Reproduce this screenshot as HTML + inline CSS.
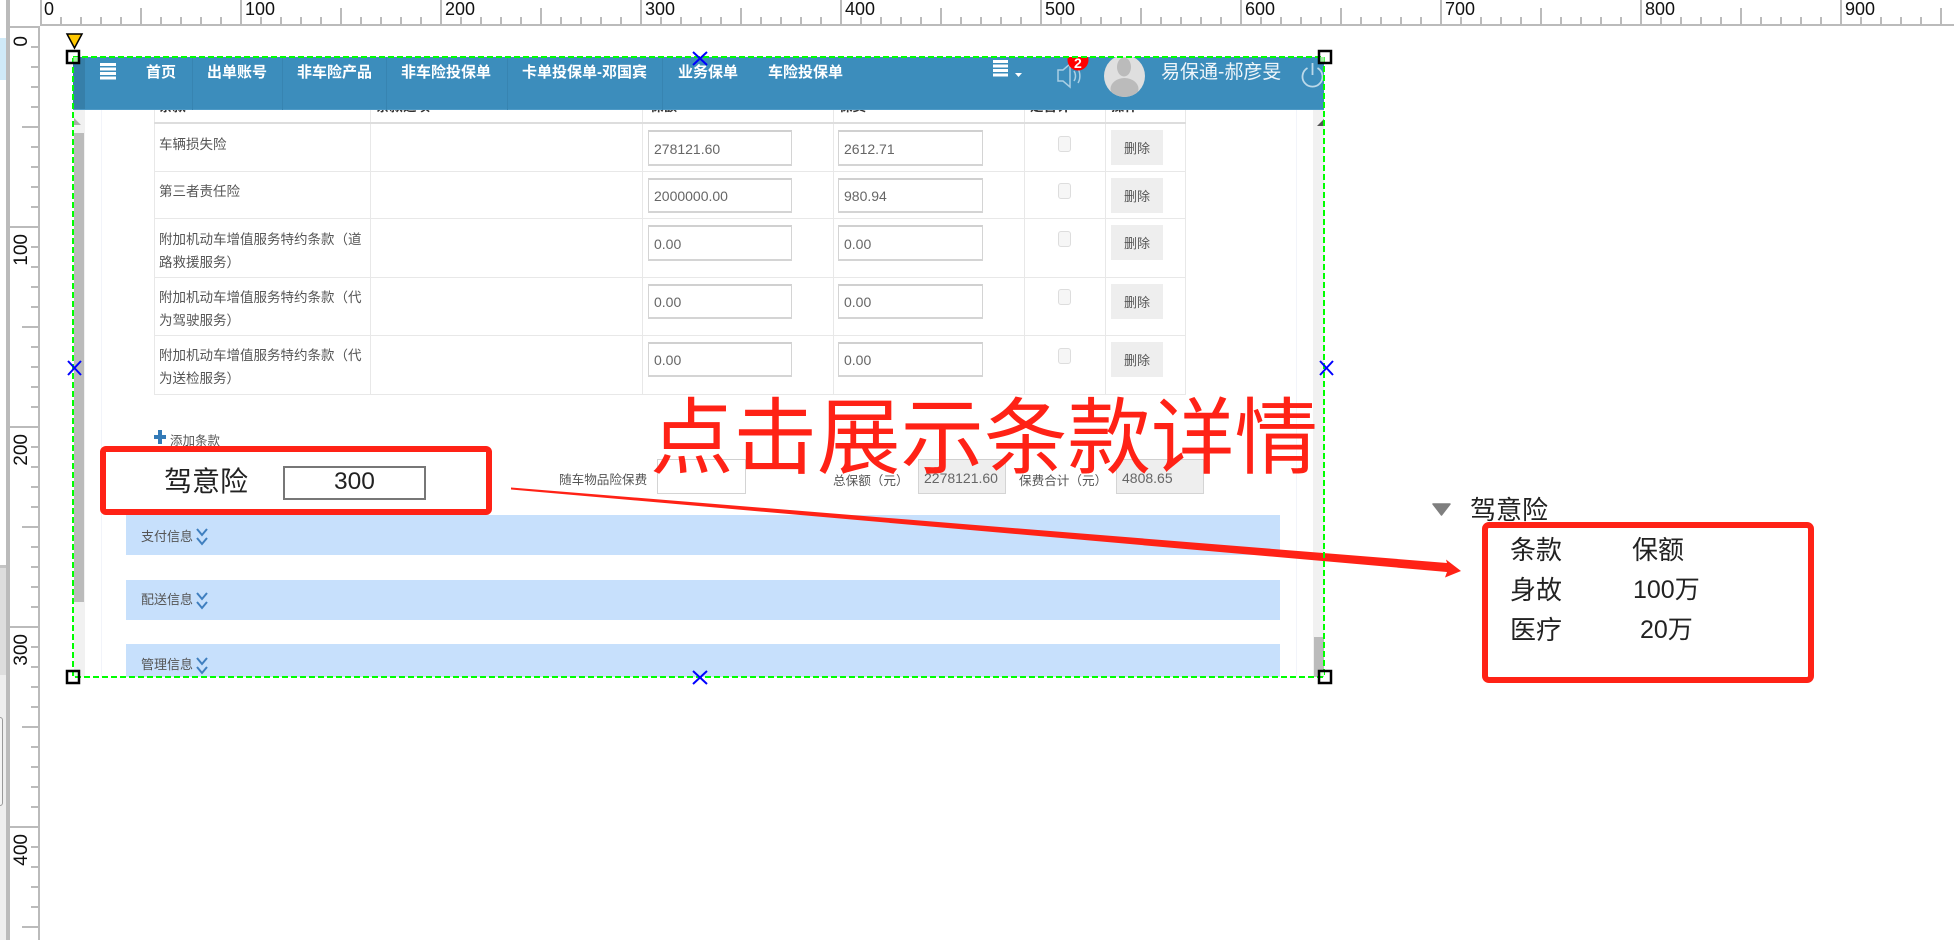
<!DOCTYPE html>
<html lang="zh-CN"><head><meta charset="utf-8"><title>驾意险</title>
<style>
html,body{margin:0;padding:0;background:#fff}
#p{position:relative;width:1954px;height:940px;overflow:hidden;background:#fff;font-family:"Liberation Sans","Noto Sans CJK SC",sans-serif;color:#555}
#p div,#p span,#p svg{position:absolute;display:block}
.t{white-space:nowrap}
.h{left:0;font-size:18px;line-height:18px;color:#111;top:0}
.v{left:15px;font-size:19px;line-height:14px;width:14px;color:#111;writing-mode:vertical-rl;transform:rotate(180deg);white-space:nowrap}
.n{top:63px;height:20px;line-height:20px;font-size:15px;font-weight:700;color:#fff;white-space:nowrap}
.d{top:57px;height:53px;width:1px;background:#3784b1}
.r{font-size:13.5px;line-height:23px;color:#555;left:159px;white-space:nowrap}
.th{top:100px;font-size:13.5px;line-height:14px;font-weight:700;color:#333;white-space:nowrap}
.i{box-sizing:border-box;border:1px solid #d4d4d4;border-top:2px solid #d0d0d0;border-bottom:2px solid #d4d4d4;background:#fff;font-size:14px;color:#666;padding-left:5px;white-space:nowrap}
.a{left:648px;width:144px}
.b{left:838px;width:145px}
.c{left:1058px;width:13px;height:16px;box-sizing:border-box;border:1px solid #ddd;border-radius:3px;background:#f6f6f6}
.x{left:1111px;width:52px;background:#eee;font-size:13px;color:#555;text-align:center}
.l{background:#e8e8e8}
.band{left:126px;width:1154px;background:#c7e0fc}
.bt{left:141px;font-size:13px;line-height:18px;color:#555;white-space:nowrap}
.big{font-family:"Liberation Sans","Noto Sans CJK SC",sans-serif;color:#222;white-space:nowrap}
</style></head><body><div id="p">

<!-- left window strip -->
<div style="left:0;top:38px;width:6px;height:42px;background:#cfe9f7"></div>
<div style="left:0;top:565px;width:6px;height:110px;background:#ddd"></div>
<div style="left:0;top:565px;width:6px;height:3px;background:#c4c4c4"></div>
<div style="left:0;top:675px;width:6px;height:265px;background:#eee"></div>
<div style="left:-3px;top:717px;width:6px;height:89px;box-sizing:border-box;border:1px solid #999;border-radius:3px;background:#f4f4f4"></div>
<div style="left:6px;top:0;width:4px;height:940px;background:#bbb"></div>

<!-- rulers -->
<div style="left:40px;top:24px;width:1914px;height:2px;background:#bbb"></div>
<div style="left:40px;top:0;width:2px;height:26px;background:#bbb"></div>
<div style="left:10px;top:26px;width:30px;height:2px;background:#bbb"></div>
<div style="left:38px;top:26px;width:2px;height:914px;background:#bbb"></div>
<div style="left:40px;top:17px;width:1914px;height:7px;background:repeating-linear-gradient(to right,#bbb 0,#bbb 2px,transparent 2px,transparent 20px)"></div>
<div style="left:140px;top:8px;width:1814px;height:16px;background:repeating-linear-gradient(to right,#bbb 0,#bbb 2px,transparent 2px,transparent 200px)"></div>
<div style="left:240px;top:0;width:1714px;height:24px;background:repeating-linear-gradient(to right,#bbb 0,#bbb 2px,transparent 2px,transparent 200px)"></div>
<div style="left:31px;top:46px;width:7px;height:894px;background:repeating-linear-gradient(to bottom,#bbb 0,#bbb 2px,transparent 2px,transparent 20px)"></div>
<div style="left:22px;top:126px;width:16px;height:814px;background:repeating-linear-gradient(to bottom,#bbb 0,#bbb 2px,transparent 2px,transparent 200px)"></div>
<div style="left:10px;top:226px;width:28px;height:714px;background:repeating-linear-gradient(to bottom,#bbb 0,#bbb 2px,transparent 2px,transparent 200px)"></div>

<div class="h" style="left:44px">0</div><div class="h" style="left:245px">100</div><div class="h" style="left:445px">200</div><div class="h" style="left:645px">300</div><div class="h" style="left:845px">400</div><div class="h" style="left:1045px">500</div><div class="h" style="left:1245px">600</div><div class="h" style="left:1445px">700</div><div class="h" style="left:1645px">800</div><div class="h" style="left:1845px">900</div>
<div class="v" style="top:36px">0</div><div class="v" style="top:234px">100</div><div class="v" style="top:434px">200</div><div class="v" style="top:634px">300</div><div class="v" style="top:834px">400</div>

<!-- page inner decoration -->
<div style="left:101px;top:109px;width:1px;height:568px;background:#f2f4fa"></div>
<div style="left:1296px;top:109px;width:1px;height:568px;background:#f2f4fa"></div>
<div style="left:74px;top:109px;width:11px;height:568px;background:#f1f1f1"></div>
<div style="left:74px;top:133px;width:10px;height:469px;background:#bbb"></div>
<svg style="left:74px;top:116px" width="8" height="10"><polygon points="0,9 0,2 7,9" fill="#aaa"/></svg>
<div style="left:1313px;top:109px;width:11px;height:568px;background:#f1f1f1"></div>
<div style="left:1314px;top:637px;width:10px;height:40px;background:#bbb"></div>
<svg style="left:1317px;top:119px" width="8" height="8"><polygon points="0,7 7,0 7,7" fill="#555"/></svg>

<!-- table -->
<div class="l" style="left:154px;top:109px;width:1px;height:285px"></div>
<div class="l" style="left:370px;top:109px;width:1px;height:285px"></div>
<div class="l" style="left:642px;top:109px;width:1px;height:285px"></div>
<div class="l" style="left:833px;top:109px;width:1px;height:285px"></div>
<div class="l" style="left:1024px;top:109px;width:1px;height:285px"></div>
<div class="l" style="left:1105px;top:109px;width:1px;height:285px"></div>
<div class="l" style="left:1185px;top:109px;width:1px;height:285px"></div>
<div style="left:154px;top:122px;width:1032px;height:2px;background:#ddd"></div>
<div class="l" style="left:154px;top:171px;width:1032px;height:1px"></div>
<div class="l" style="left:154px;top:218px;width:1032px;height:1px"></div>
<div class="l" style="left:154px;top:277px;width:1032px;height:1px"></div>
<div class="l" style="left:154px;top:335px;width:1032px;height:1px"></div>
<div class="l" style="left:154px;top:394px;width:1032px;height:1px"></div>

<div class="th" style="left:159px">条款</div><div class="th" style="left:376px">条款选项</div><div class="th" style="left:650px">保额</div><div class="th" style="left:839px">保费</div><div class="th" style="left:1030px">是否计</div><div class="th" style="left:1111px">操作</div>

<div class="r" style="top:133px">车辆损失险</div>
<div class="r" style="top:180px">第三者责任险</div>
<div class="r" style="top:228px;width:210px;white-space:normal">附加机动车增值服务特约条款（道路救援服务）</div>
<div class="r" style="top:286px;width:210px;white-space:normal">附加机动车增值服务特约条款（代为驾驶服务）</div>
<div class="r" style="top:344px;width:210px;white-space:normal">附加机动车增值服务特约条款（代为送检服务）</div>

<div class="i a" style="top:130px;height:36px;line-height:34px">278121.60</div>
<div class="i b" style="top:130px;height:36px;line-height:34px">2612.71</div>
<div class="i a" style="top:178px;height:35px;line-height:33px">2000000.00</div>
<div class="i b" style="top:178px;height:35px;line-height:33px">980.94</div>
<div class="i a" style="top:225px;height:36px;line-height:34px">0.00</div>
<div class="i b" style="top:225px;height:36px;line-height:34px">0.00</div>
<div class="i a" style="top:284px;height:35px;line-height:33px">0.00</div>
<div class="i b" style="top:284px;height:35px;line-height:33px">0.00</div>
<div class="i a" style="top:342px;height:35px;line-height:33px">0.00</div>
<div class="i b" style="top:342px;height:35px;line-height:33px">0.00</div>

<div class="c" style="top:136px"></div><div class="c" style="top:183px"></div><div class="c" style="top:231px"></div><div class="c" style="top:289px"></div><div class="c" style="top:348px"></div>

<div class="x" style="top:130px;height:35px;line-height:37px">删除</div>
<div class="x" style="top:178px;height:35px;line-height:37px">删除</div>
<div class="x" style="top:225px;height:35px;line-height:37px">删除</div>
<div class="x" style="top:284px;height:35px;line-height:37px">删除</div>
<div class="x" style="top:342px;height:35px;line-height:37px">删除</div>

<!-- add clause -->
<svg style="left:154px;top:430px" width="12" height="14"><path d="M4 0h4v5h4v4H8v5H4V9H0V5h4z" fill="#337ab7"/></svg>
<div class="t" style="left:170px;top:432px;font-size:12.5px;line-height:18px;color:#555">添加条款</div>

<!-- summary row -->
<div class="t" style="left:559px;top:471px;font-size:12.6px;line-height:18px;color:#555">随车物品险保费</div>
<div class="i" style="left:657px;top:459px;width:89px;height:35px;border-width:1px"></div>
<div class="t" style="left:833px;top:472px;font-size:12.6px;line-height:18px;color:#555">总保额（元）</div>
<div class="i" style="left:918px;top:459px;width:88px;height:35px;border-width:1px;background:#eee;line-height:37px;font-size:14px">2278121.60</div>
<div class="t" style="left:1019px;top:472px;font-size:12.6px;line-height:18px;color:#555">保费合计（元）</div>
<div class="i" style="left:1116px;top:459px;width:88px;height:35px;border-width:1px;background:#eee;line-height:37px;font-size:14px">4808.65</div>

<!-- bands -->
<div class="band" style="top:515px;height:40px"></div>
<div class="band" style="top:580px;height:40px"></div>
<div class="band" style="top:644px;height:33px"></div>
<div class="bt" style="top:528px">支付信息</div>
<div class="bt" style="top:591px">配送信息</div>
<div class="bt" style="top:656px">管理信息</div>
<svg style="left:196px;top:528px" width="12" height="18"><path d="M1 1l5 6 5-6M1 10l5 6 5-6" fill="none" stroke="#3f7fbf" stroke-width="2"/></svg>
<svg style="left:196px;top:592px" width="12" height="18"><path d="M1 1l5 6 5-6M1 10l5 6 5-6" fill="none" stroke="#3f7fbf" stroke-width="2"/></svg>
<svg style="left:196px;top:657px" width="12" height="18"><path d="M1 1l5 6 5-6M1 10l5 6 5-6" fill="none" stroke="#3f7fbf" stroke-width="2"/></svg>

<!-- header -->
<div style="left:73px;top:57px;width:1251px;height:53px;background:#3c8dbc;overflow:hidden"></div>
<div style="left:73px;top:57px;width:12px;height:53px;background:#367fa9"></div>
<div style="left:73px;top:109px;width:1251px;height:1px;background:#4f9ac6"></div>
<div class="d" style="left:192px"></div><div class="d" style="left:282px"></div><div class="d" style="left:386px"></div><div class="d" style="left:507px"></div><div class="d" style="left:662px"></div>
<svg style="left:100px;top:63px" width="17" height="17"><path d="M0 0h16v3H0zM0 4.500h16v3H0zM0 9h16v3H0zM0 13.500h16v3H0z" fill="#fff"/></svg>
<div class="n" style="left:146px">首页</div>
<div class="n" style="left:207px">出单账号</div>
<div class="n" style="left:297px">非车险产品</div>
<div class="n" style="left:401px">非车险投保单</div>
<div class="n" style="left:522px">卡单投保单-邓国宾</div>
<div class="n" style="left:678px">业务保单</div>
<div class="n" style="left:768px">车险投保单</div>
<svg style="left:993px;top:60px" width="16" height="18"><path d="M0 0h15v3H0zM0 4.500h15v3H0zM0 9h15v3H0zM0 13.500h15v3H0z" fill="#fff"/></svg>
<svg style="left:1015px;top:73px" width="8" height="5"><polygon points="0,0 7,0 3.500,4" fill="#fff"/></svg>
<svg style="left:1056px;top:62px" width="27" height="27"><path d="M2 8h5l7-6v23l-7-6H2z" fill="none" stroke="#a9cfe4" stroke-width="1.500"/><path d="M18 9c2 3 2 7 0 10M22 7c2.500 4 2.500 10 0 14" fill="none" stroke="#a9cfe4" stroke-width="1.500"/></svg>
<svg style="left:1067px;top:57px" width="22" height="14"><circle cx="11" cy="3" r="10.500" fill="#f00"/></svg>
<div class="t" style="left:1074px;top:55px;font-size:14px;font-weight:700;line-height:16px;color:#fff;height:14px;overflow:hidden">2</div>
<svg style="left:1104px;top:57px" width="42" height="41"><defs><clipPath id="av"><ellipse cx="20.500" cy="19" rx="20.500" ry="21"/></clipPath></defs><g clip-path="url(#av)"><rect width="42" height="41" fill="#dfdfdf"/><ellipse cx="20" cy="10" rx="7" ry="9.500" fill="#bbb"/><ellipse cx="20.500" cy="32" rx="14" ry="11" fill="#bbb"/></g></svg>
<div class="t" style="left:1161px;top:60px;font-size:19px;line-height:26px;color:#f0f6fa">易保通-郝彦旻</div>
<svg style="left:1301px;top:62px" width="23" height="26"><path d="M11.500 1v12" stroke="#bcd9e9" stroke-width="1.800" fill="none"/><path d="M6.500 6a10 10 0 1 0 10 0" stroke="#bcd9e9" stroke-width="1.800" fill="none"/></svg>

<!-- red highlight box -->
<div style="left:100px;top:446px;width:392px;height:69px;box-sizing:border-box;border:6px solid #ff2216;border-radius:6px;background:#fff"></div>
<div class="big" style="left:164px;top:462px;font-size:28px;line-height:40px">驾意险</div>
<div style="left:283px;top:466px;width:143px;height:34px;box-sizing:border-box;border:2px solid #777;background:#fff;text-align:center;font-size:24.500px;line-height:28px;color:#222">300</div>

<!-- annotation -->
<div class="t" style="left:650px;top:372px;font-family:'Noto Sans CJK SC','WenQuanYi Zen Hei',sans-serif;font-size:83.500px;line-height:120px;color:#ff2216">点击展示条款详情</div>
<svg style="left:0;top:0" width="1954" height="940"><polygon points="511,487.500 1447,563 1446,559.500 1461,571 1445,577.500 1447,572 511,489.500" fill="#ff2216"/></svg>

<!-- right panel -->
<svg style="left:1432px;top:503px" width="20" height="14"><polygon points="1,1 18,1 9.500,12" fill="#7f7f7f" stroke="#7f7f7f" stroke-width="1.500" stroke-linejoin="round"/></svg>
<div class="big" style="left:1470px;top:492px;font-size:26px;line-height:36px">驾意险</div>
<div style="left:1482px;top:522px;width:332px;height:161px;box-sizing:border-box;border:6px solid #ff2216;border-radius:7px"></div>
<div class="big" style="left:1510px;top:532px;font-size:26px;line-height:36px">条款</div>
<div class="big" style="left:1632px;top:532px;font-size:26px;line-height:36px">保额</div>
<div class="big" style="left:1510px;top:572px;font-size:26px;line-height:36px">身故</div>
<div class="big" style="left:1633px;top:572px;font-size:25px;line-height:36px">100万</div>
<div class="big" style="left:1510px;top:612px;font-size:26px;line-height:36px">医疗</div>
<div class="big" style="left:1640px;top:612px;font-size:25px;line-height:36px">20万</div>

<!-- selection frame -->
<svg style="left:0;top:0" width="1954" height="940">
<rect x="73" y="57" width="1251" height="620" fill="none" stroke="#00ff00" stroke-width="2" stroke-dasharray="6 3"/>
<rect x="73.500" y="57" width="5.500" height="5.500" fill="#9ff09f"/><rect x="1319" y="57" width="5.500" height="5.500" fill="#9ff09f"/>
<rect x="74" y="671" width="5" height="5" fill="#dfffdf"/><rect x="1319" y="671" width="5" height="5" fill="#dfffdf"/>
<g fill="none" stroke="#000" stroke-width="2.500"><rect x="67" y="51" width="12" height="12"/><rect x="1319" y="51" width="12" height="12"/><rect x="67" y="671" width="12" height="12"/><rect x="1319" y="671" width="12" height="12"/></g>
<polygon points="67,34 82,34 74.500,48" fill="#ffc800" stroke="#000" stroke-width="1.500"/>
<g stroke="#0000ff" stroke-width="2" fill="none"><path d="M693 52l14 13M707 52l-14 13"/><path d="M68 361l13 14M81 361l-13 14"/><path d="M1320 361l13 14M1333 361l-13 14"/><path d="M693 671l14 13M707 671l-14 13"/></g>
</svg>
</div></body></html>
